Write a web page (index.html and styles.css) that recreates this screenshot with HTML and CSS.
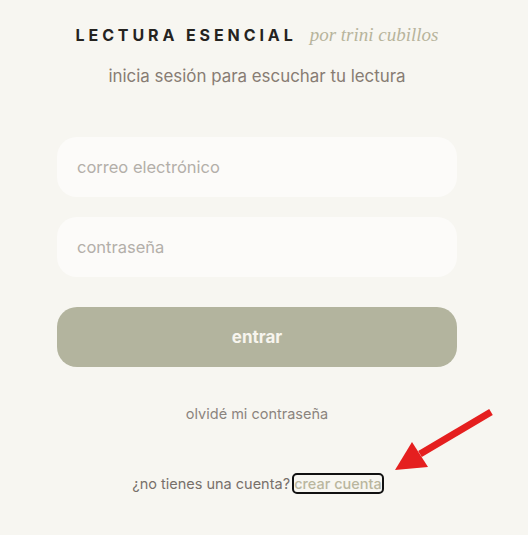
FILE: index.html
```html
<!DOCTYPE html>
<html lang="es">
<head>
<meta charset="utf-8">
<link rel="stylesheet" href="styles.css">
</head>
<body>
<main class="login">
  <header class="brand">
    <h1 class="brand-title">LECTURA ESENCIAL</h1>
    <span class="brand-by">por trini cubillos</span>
  </header>
  <p class="subtitle">inicia sesión para escuchar tu lectura</p>
  <form class="form">
    <input class="field" type="email" placeholder="correo electrónico">
    <input class="field" type="password" placeholder="contraseña">
    <button class="submit" type="button">entrar</button>
  </form>
  <a class="forgot" href="#">olvidé mi contraseña</a>
  <p class="signup">¿no tienes una cuenta? <a class="signup-link" href="#">crear cuenta</a></p>
</main>
<svg class="arrow" width="120" height="80" viewBox="0 0 120 80">
  <line x1="111" y1="12" x2="40" y2="54" stroke="#e51f1f" stroke-width="7" stroke-linecap="butt"/>
  <polygon points="15,70 32,42 48,67" fill="#e51f1f"/>
</svg>
</body>
</html>
```
FILE: styles.css
```css
html, body {
  margin: 0;
  padding: 0;
  background: #f7f6f1;
  height: 100%;
}
body {
  font-family: Inter, "Noto Sans", sans-serif;
  position: relative;
}
.login {
  width: 400px;
  margin-left: 57px;
  padding-top: 24px;
  display: flex;
  flex-direction: column;
  align-items: center;
}
.brand {
  display: flex;
  align-items: baseline;
  gap: 13px;
}
.brand-title {
  margin: 0;
  font-size: 16px;
  font-weight: 700;
  letter-spacing: 3.9px;
  color: #25231f;
}
.brand-by {
  font-family: "Liberation Serif", serif;
  font-style: italic;
  font-size: 19px;
  color: #b7b49c;
}
.subtitle {
  margin: 20px 0 0;
  font-size: 16.9px;
  color: #877c73;
}
.form {
  width: 100%;
  margin-top: 51px;
  display: flex;
  flex-direction: column;
  gap: 20px;
}
.field {
  box-sizing: border-box;
  width: 100%;
  height: 60px;
  border: none;
  border-radius: 20px;
  background: #fcfbf9;
  padding: 0 20px;
  font-family: inherit;
  font-size: 16.5px;
  color: #55504b;
  outline: none;
}
.field::placeholder {
  color: #b3afa9;
}
.submit {
  margin-top: 10px;
  height: 60px;
  border: none;
  border-radius: 20px;
  background: #b3b49e;
  color: #f7f5ee;
  font-family: inherit;
  font-size: 17px;
  font-weight: 700;
}
.forgot {
  margin-top: 38px;
  font-size: 14.5px;
  color: #8b847e;
  text-decoration: none;
}
.signup {
  margin: 53px 0 0;
  font-size: 14.5px;
  color: #77706a;
}
.signup-link {
  color: #bab69e;
  font-weight: 500;
  text-decoration: none;
  outline: 2px solid #111;
  outline-offset: 0;
  border-radius: 3px;
}
.arrow {
  position: absolute;
  left: 380px;
  top: 400px;
}
```
